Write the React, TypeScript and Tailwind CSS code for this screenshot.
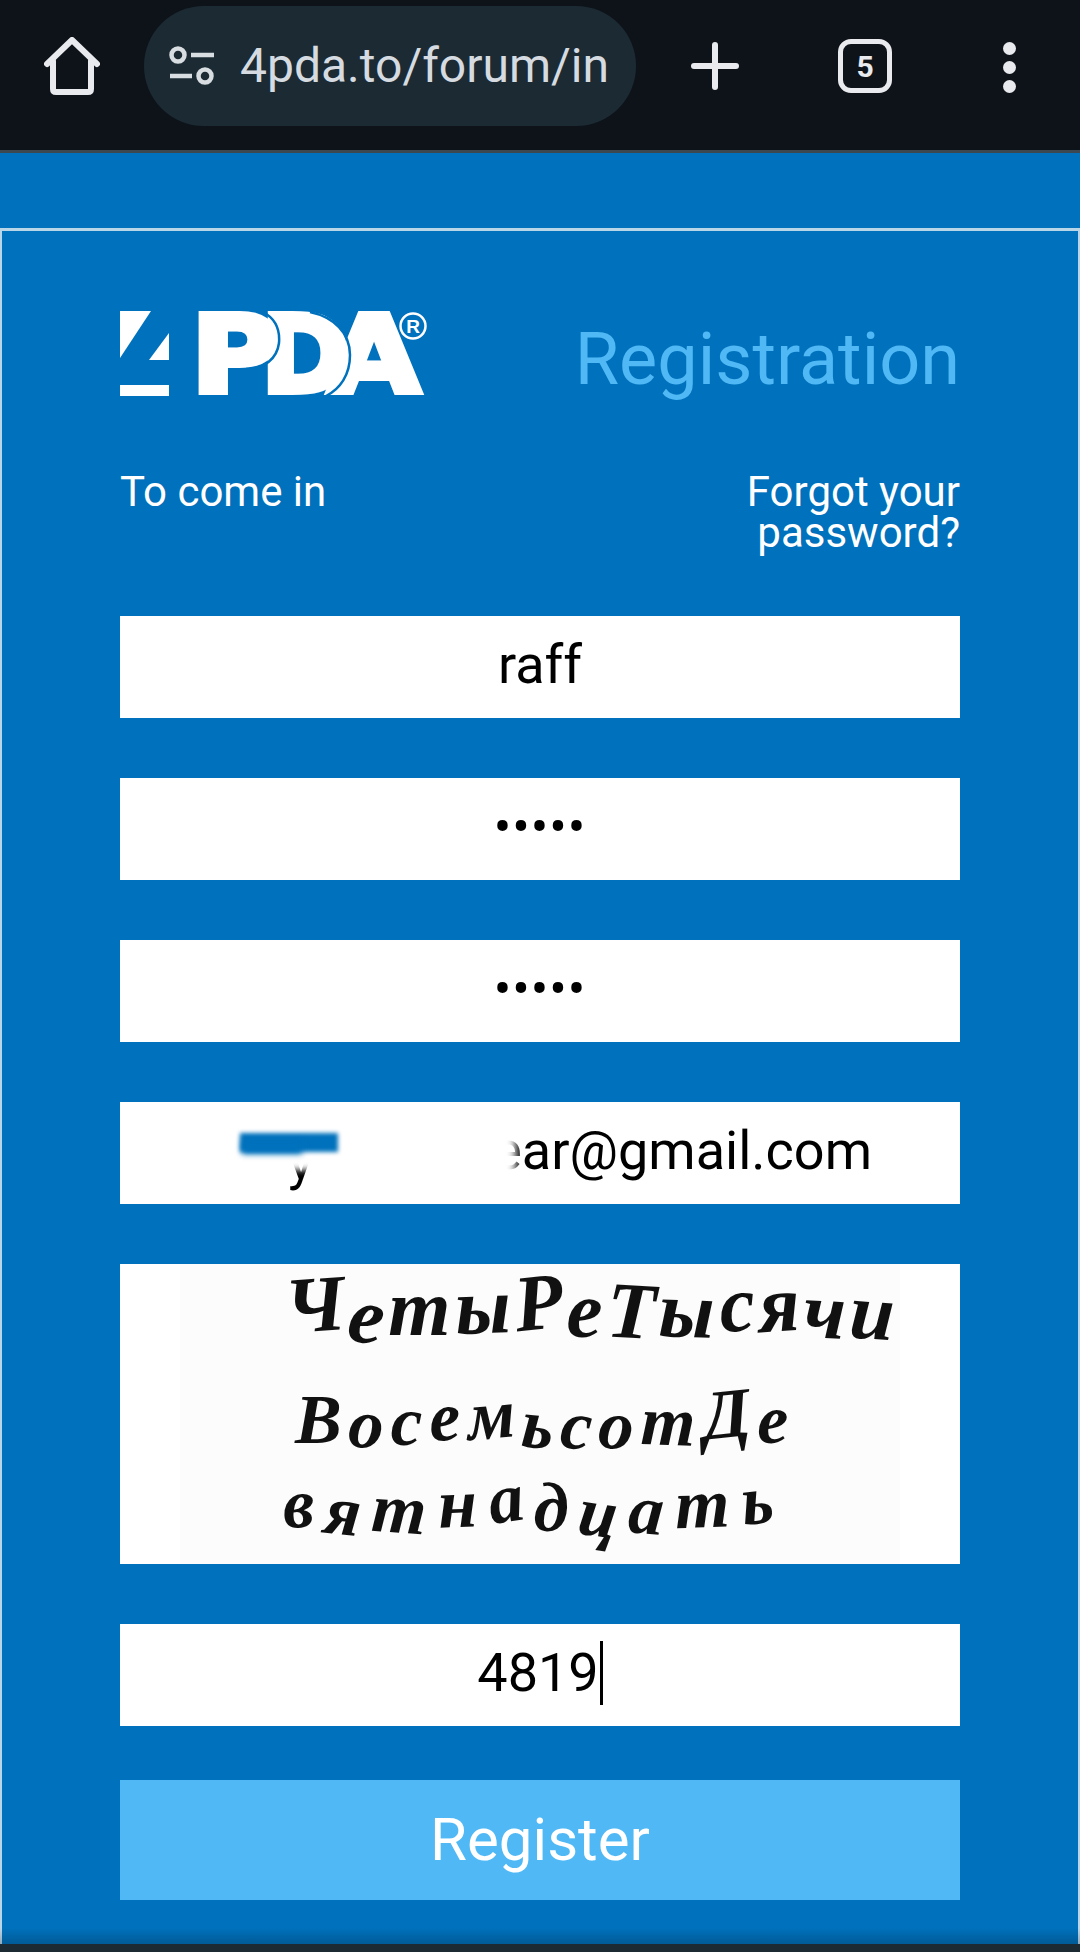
import React from 'react';

const roboto = "font-['Roboto',sans-serif]";

// per letter wobble of the handwritten captcha: y shift in px, also used as rotation
const captchaLines: { text: string; size: string; gap: string; pad: string; jitter: number[] }[] = [
  {
    text: 'ЧетыРеТысячи',
    size: 'text-[80px]',
    gap: 'tracking-[4px]',
    pad: 'ml-[105px]',
    jitter: [-4, 8, 0, -2, -6, 2, 3, 2, -4, -4, 3, 4],
  },
  {
    text: 'ВосемьсотДе',
    size: 'text-[70px]',
    gap: 'tracking-[7px]',
    pad: 'ml-[115px] mt-[22px]',
    jitter: [0, 5, 2, -3, -5, 5, 6, 6, 2, -6, 0],
  },
  {
    text: 'вятнадцать',
    size: 'text-[70px]',
    gap: 'tracking-[11px]',
    pad: 'ml-[103px] -mt-[4px]',
    jitter: [-2, 6, 4, -2, -8, 2, 8, 5, -2, -6],
  },
];

function HomeIcon() {
  return (
    <svg width="56" height="58" viewBox="0 0 56 58" fill="none" stroke="#e8eaed" strokeWidth="6" strokeLinejoin="round" strokeLinecap="round">
      <path d="M3 27 L28 3 L53 27" />
      <path d="M9 24 V52 Q9 55 12 55 H44 Q47 55 47 52 V24" />
    </svg>
  );
}

function TuneIcon() {
  return (
    <svg width="46" height="40" viewBox="0 0 46 40" fill="none" stroke="#d8dde1" strokeWidth="4.5">
      <circle cx="9" cy="9" r="6.5" />
      <path d="M22 9 H45" />
      <circle cx="36" cy="30" r="6.5" />
      <path d="M1 30 H23" />
    </svg>
  );
}

function Logo() {
  return (
    <svg width="310" height="88" viewBox="0 0 310 88">
      {/* the 4 mark */}
      <polygon points="0,0 31,0 0,47" fill="#fff" />
      <polygon points="49,22 49,49 29,49" fill="#fff" />
      <rect x="0" y="74" width="49" height="11" fill="#fff" />
      <g fontFamily="'DejaVu Sans', sans-serif" fontWeight="700" fontSize="107" fill="#fff" stroke="#fff" strokeWidth="6">
        <text x="208" y="81" textLength="92" lengthAdjust="spacingAndGlyphs">A</text>
        <text x="141" y="81">D</text>
        <text x="71" y="81" textLength="88" lengthAdjust="spacingAndGlyphs">P</text>
      </g>
      {/* thin blue cuts between the letters */}
      <path d="M143 1 C156 8 160 20 159 32 C157 48 144 58 126 58" fill="none" stroke="#0071bc" strokeWidth="2.5" />
      <path d="M190 1 C214 6 230 22 230 44 C230 64 220 78 206 85" fill="none" stroke="#0071bc" strokeWidth="2.5" />
      <circle cx="293" cy="15" r="12.5" fill="none" stroke="#fff" strokeWidth="2.5" />
      <text x="293" y="22" textAnchor="middle" fontFamily="'Liberation Sans', sans-serif" fontSize="19" fontWeight="700" fill="#fff">
        R
      </text>
    </svg>
  );
}

function Field({ children, className = '' }: { children: React.ReactNode; className?: string }) {
  return (
    <div className={`relative flex h-[102px] items-center justify-center overflow-hidden bg-white text-black ${className}`}>
      {children}
    </div>
  );
}

export default function App() {
  return (
    <div className={`relative flex h-[1952px] w-[1080px] flex-col overflow-hidden bg-[#0071bc] ${roboto}`}>
      {/* Browser toolbar */}
      <header className="flex h-[153px] shrink-0 items-start border-b-[3px] border-[#3d4750] bg-[#0e131a]">
        <div className="ml-[44px] mt-[37px]">
          <HomeIcon />
        </div>
        <div className="ml-[44px] mt-[6px] flex h-[120px] w-[492px] items-center rounded-full bg-[#1c2b33] pl-[25px]">
          <TuneIcon />
          <span className="ml-[25px] whitespace-nowrap text-[48px] leading-none text-[#d5dbe0]">4pda.to/forum/in</span>
        </div>
        <svg className="ml-[55px] mt-[42px]" width="48" height="48" viewBox="0 0 48 48" fill="none" stroke="#e8eaed" strokeWidth="6" strokeLinecap="round">
          <path d="M24 3 V45" />
          <path d="M3 24 H45" />
        </svg>
        <div className="ml-[99px] mt-[39px] flex h-[54px] w-[54px] items-center justify-center rounded-[13px] border-[5px] border-[#e8eaed] text-[30px] font-bold text-[#e8eaed]">
          5
        </div>
        <div className="ml-[111px] mt-[42px] flex flex-col gap-[6px]">
          <div className="h-[13px] w-[13px] rounded-full bg-[#e8eaed]" />
          <div className="h-[13px] w-[13px] rounded-full bg-[#e8eaed]" />
          <div className="h-[13px] w-[13px] rounded-full bg-[#e8eaed]" />
        </div>
      </header>

      <div className="h-[75px] shrink-0" />

      {/* Login panel */}
      <main className="flex flex-1 flex-col border-x-[2px] border-t-[3px] border-[#b9d5e8] px-[118px]">
        <div className="mt-[80px] flex h-[88px] items-start justify-between">
          <Logo />
          <h1 className="mt-[5px] text-[72px] leading-[88px] text-[#4fb8f5]">Registration</h1>
        </div>

        <div className="mt-[72px] flex items-start justify-between text-[42px] leading-[41px] text-white">
          <span>To come in</span>
          <span className="text-right">
            Forgot your
            <br />
            password?
          </span>
        </div>

        <Field className="mt-[63px] pb-[5px] text-[54px]">raff</Field>
        <Field className="mt-[60px] pb-[2px] text-[52px] tracking-[1px]">•••••</Field>
        <Field className="mt-[60px] pb-[2px] text-[52px] tracking-[1px]">•••••</Field>
        <Field className="mt-[60px] pb-[5px] text-[54px]">
          <span className="absolute right-[88px] whitespace-nowrap">ear@gmail.com</span>
          <span className="absolute left-[168px] top-[18px]">y</span>
          {/* the author's smudge over the address */}
          <div className="absolute left-[130px] top-[30px] h-[38px] w-[110px] bg-white blur-[3px]" />
          <div className="absolute left-[262px] top-[14px] h-[70px] w-[134px] bg-white blur-[4px]" />
          <div className="absolute left-[120px] top-[31px] h-[19px] w-[98px] bg-[#0071bc] blur-[2px]" />
          <div className="absolute left-[122px] top-[38px] h-[14px] w-[60px] bg-[#0071bc] blur-[3px]" />
        </Field>

        {/* Captcha picture */}
        <div className="mt-[60px] flex h-[300px] justify-center bg-white">
          <div className="flex w-[720px] flex-col justify-center overflow-hidden bg-[#fbfcfb] pb-[14px] font-['Liberation_Serif',serif] font-bold italic text-[#111] blur-[0.7px]">
            {captchaLines.map((line) => (
              <div key={line.text} className={`flex leading-[90px] ${line.size} ${line.gap} ${line.pad}`}>
                {line.text.split('').map((ch, i) => (
                  <span key={i} style={{ transform: `translateY(${line.jitter[i]}px) rotate(${line.jitter[i]}deg)` }}>
                    {ch}
                  </span>
                ))}
              </div>
            ))}
          </div>
        </div>

        <Field className="mt-[60px] pb-[5px] text-[54px]">
          4819
          <span className="ml-[1px] inline-block h-[64px] w-[3px] bg-black" />
        </Field>

        <button className="mt-[54px] flex h-[120px] items-center justify-center bg-[#4fb8f5] text-[60px] text-white">
          Register
        </button>
      </main>

      <div className="pointer-events-none absolute bottom-[8px] left-0 h-[16px] w-full bg-gradient-to-b from-transparent to-black/20" />
      <div className="h-[8px] shrink-0 bg-[#1b2a33]" />
    </div>
  );
}
